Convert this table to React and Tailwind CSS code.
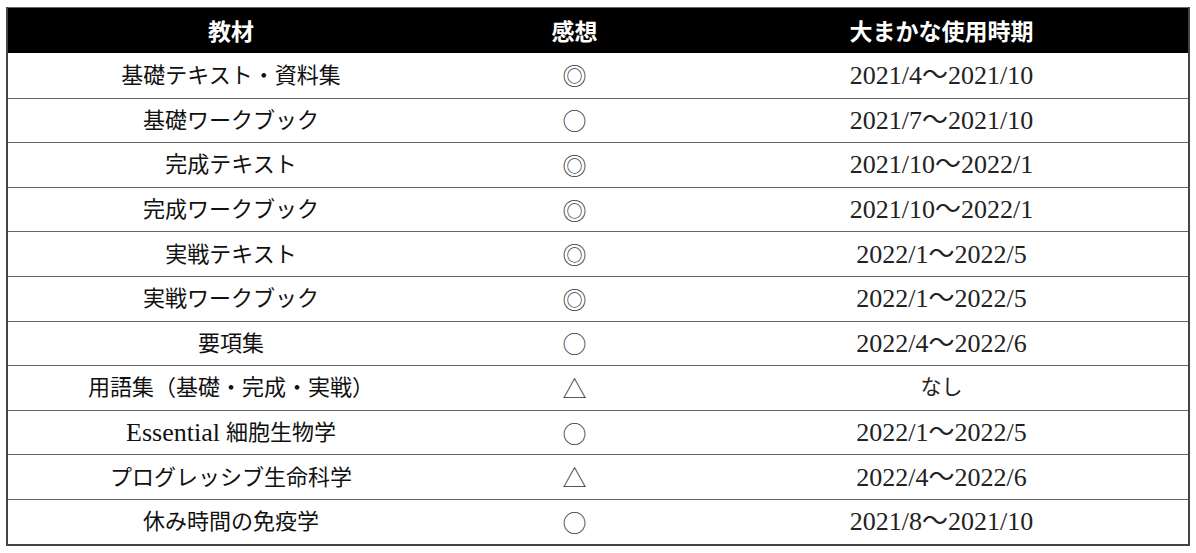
import React from 'react'

const rows = [
  ['基礎テキスト・資料集', '◎', '2021/4～2021/10'],
  ['基礎ワークブック', '○', '2021/7～2021/10'],
  ['完成テキスト', '◎', '2021/10～2022/1'],
  ['完成ワークブック', '◎', '2021/10～2022/1'],
  ['実戦テキスト', '◎', '2022/1～2022/5'],
  ['実戦ワークブック', '◎', '2022/1～2022/5'],
  ['要項集', '○', '2022/4～2022/6'],
  ['用語集（基礎・完成・実戦）', '△', 'なし'],
  ['Essential 細胞生物学', '○', '2022/1～2022/5'],
  ['プログレッシブ生命科学', '△', '2022/4～2022/6'],
  ['休み時間の免疫学', '○', '2021/8～2021/10'],
]

const cjk = { fontFamily: '"Noto Sans CJK JP", sans-serif' }

function Material({ text }) {
  if (text.startsWith('Essential')) {
    return (
      <>
        <span className="text-[26px]">Essential</span>
        <span className="ml-[6px]">細胞生物学</span>
      </>
    )
  }
  return text
}

export default function App() {
  return (
    <div className="w-[1196px] h-[553px] bg-white pt-[7px] pl-[6px]">
      <div
        className="w-[1184px] border-x-2 border-b-2 border-[#444]"
        style={{ fontFamily: '"Liberation Serif", "Noto Sans CJK JP", serif' }}
      >
        {/* header */}
        <div className="grid grid-cols-[446px_241px_493px] h-[46px] bg-black border-t border-[#666] text-white text-[23px] font-bold" style={cjk}>
          <div className="flex items-center justify-center">教材</div>
          <div className="flex items-center justify-center">感想</div>
          <div className="flex items-center justify-center">大まかな使用時期</div>
        </div>

        {rows.map((r, i) => (
          <div
            key={i}
            className={`grid grid-cols-[446px_241px_493px] h-[44.6px] text-[#111] ${i > 0 ? 'border-t border-[#666]' : ''}`}
          >
            <div className="flex items-center justify-center text-[22px]">
              <Material text={r[0]} />
            </div>
            <div className="flex items-center justify-center text-[24px] text-[#333] font-light" style={cjk}>{r[1]}</div>
            <div className={`flex items-center justify-center text-[#222] ${r[2] === 'なし' ? 'text-[21px]' : 'text-[26px]'}`}>{r[2]}</div>
          </div>
        ))}
      </div>
    </div>
  )
}
